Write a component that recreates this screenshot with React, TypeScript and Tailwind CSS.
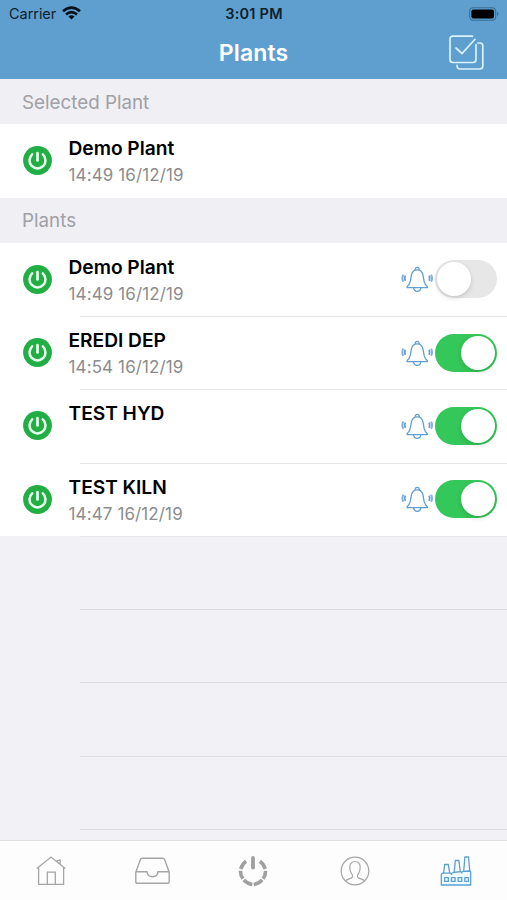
type Plant = { name: string; date?: string; on: boolean };

const plants: Plant[] = [
  { name: "Demo Plant", date: "14:49 16/12/19", on: false },
  { name: "EREDI DEP", date: "14:54 16/12/19", on: true },
  { name: "TEST HYD", on: true },
  { name: "TEST KILN", date: "14:47 16/12/19", on: true },
];

function PowerBadge() {
  return (
    <svg className="ml-[23px] mt-[22px] size-[29px] shrink-0" viewBox="0 0 29 29" fill="none">
      <circle cx="14.5" cy="14.5" r="14.4" fill="#21af43" />
      <path d="M9.2 8.4a8 8 0 1 0 10.6 0" stroke="#eafff0" strokeWidth="2.5" strokeLinecap="round" />
      <path d="M14.5 7.2v7.2" stroke="#eafff0" strokeWidth="2.7" strokeLinecap="round" />
    </svg>
  );
}

function Bell() {
  return (
    <svg className="h-[28px] w-[34px] shrink-0" viewBox="0 0 34 28" fill="none" stroke="#609fd4" strokeWidth="1.3" strokeLinejoin="round">
      <path d="M15.3 5a2 2 0 1 1 3.8 0" />
      <path d="M17.2 4.8c-3.4 0-5.2 2.1-5.8 5.4l-1.2 6.5c-.5 2.2-1.3 3.7-3.2 5v.9h20.4v-.9c-1.9-1.3-2.7-2.8-3.2-5L23 10.2c-.6-3.3-2.4-5.4-5.8-5.4z" />
      <path d="M13.4 22.6c.5 2.6 2 3.7 3.8 3.7s3.3-1.1 3.8-3.7" />
      <path d="M5.3 10.6q-1.3 2.6 0 5.2M29.1 10.6q1.3 2.6 0 5.2" strokeWidth="1.8" />
      <path d="M3.3 9.6q-1.9 3.6 0 7.2M31.1 9.6q1.9 3.6 0 7.2" stroke="#82b3dc" strokeWidth="2" />
    </svg>
  );
}

function Toggle({ on }: { on: boolean }) {
  return (
    <div className={`flex h-[38px] w-[62px] items-center rounded-full p-[2px] ${on ? "justify-end bg-[#34c759]" : "bg-[#e7e7e8]"}`}>
      <div className="size-[34px] rounded-full bg-white shadow-[0_2px_5px_rgba(0,0,0,0.15)]" />
    </div>
  );
}

function PlantRow({ plant, controls = false }: { plant: Plant; controls?: boolean }) {
  return (
    <div className="flex h-[73.3px] bg-white">
      <PowerBadge />
      <div className="ml-[16.5px] w-[200px] pt-[12px]">
        <div className="text-[19.2px] leading-[24px] font-semibold tracking-[-0.03px] whitespace-nowrap text-black">{plant.name}</div>
        <div className="mt-[4px] text-[17px] leading-[22px] tracking-[0.12px] whitespace-nowrap text-[#8c8c8e]">{plant.date}</div>
      </div>
      {controls && (
        <div className="mr-[10px] ml-auto flex h-full items-center">
          <Bell />
          <div className="ml-px">
            <Toggle on={plant.on} />
          </div>
        </div>
      )}
    </div>
  );
}

function Divider({ faint = false }: { faint?: boolean }) {
  return <div className={`relative -mb-px ml-[80px] h-px ${faint ? "bg-[#e6e6e8]" : "bg-[#dcdce1]"}`} />;
}

function SectionTitle({ children }: { children: string }) {
  return (
    <div className="flex h-[45px] items-center bg-[#efeff4] pt-[2px] pl-[22px] text-[18.8px] tracking-[0px] text-[#a0a0a5]">{children}</div>
  );
}

function HomeIcon() {
  return (
    <svg className="h-[30px] w-[30px]" viewBox="0 0 30 30" fill="none" stroke="#a5a5a5" strokeWidth="1.3">
      <path d="M.8 12.4 15 1l14.2 11.4M2.6 11v17.4h25V11M11.3 28.4V16.2h8v12.2M20.2 5.2l3.9-1v4.6" />
    </svg>
  );
}

function InboxIcon() {
  return (
    <svg className="h-[28px] w-[35px]" viewBox="0 0 35 28" fill="none" stroke="#a5a5a5" strokeWidth="1.4" strokeLinejoin="round">
      <path d="M.8 15.2 5.3 2.8q.4-1.5 2-1.5h20.4q1.6 0 2 1.5l4.5 12.4v9.6q0 1.5-1.5 1.5H2.3q-1.5 0-1.5-1.5zM.8 14.8h11.3c.2 3.3 2.4 5 5.4 5s5.2-1.7 5.4-5h11.3" />
    </svg>
  );
}

function PowerIcon() {
  return (
    <svg className="h-[32px] w-[30px]" viewBox="0 0 30 32" fill="none" stroke="#a0a0a0" strokeLinecap="round">
      <path d="M15 3v9.6" strokeWidth="3.8" />
      <g strokeWidth="3.6" strokeLinecap="butt">
        <path d="M8.1 6.3Q4.2 8.8 2.8 14" />
        <path d="M2.4 15.7q.1 4.6 2.5 8" />
        <path d="M5.8 24.9q3.4 4 8.5 4.6" />
        <path d="M15.7 29.5q5.1-.6 8.5-4.6" />
        <path d="M25.1 23.7q2.4-3.4 2.5-8" />
        <path d="M27.2 14q-1.4-5.2-5.3-7.7" />
      </g>
    </svg>
  );
}

function UserIcon() {
  return (
    <svg className="size-[30px]" viewBox="0 0 30 30" fill="none" stroke="#a5a5a5" strokeWidth="1.2">
      <circle cx="15" cy="15" r="13.8" />
      <path d="M5.2 24.8c2.5-2 6.5-2 7.2-3.8.6-1.5-.2-2.8-1.1-3.9-1-1.2-1.4-3.1-1.5-5.2C9.6 7.7 11.7 5.5 15 5.5s5.4 2.2 5.2 6.4c-.1 2.1-.5 4-1.5 5.2-.9 1.1-1.7 2.4-1.1 3.9.7 1.8 4.7 1.8 7.2 3.8" />
    </svg>
  );
}

function FactoryIcon() {
  return (
    <svg className="h-[32px] w-[32px]" viewBox="0 0 32 32" fill="none" stroke="#5ba0d2" strokeWidth="1.3" strokeLinejoin="round">
      <path d="M1.3 30V20q0-1.2 1.2-1.8h7.8q1.2 0 1.2 1.2 0-1.3 1.6-1.9l7.2-.8q1.4 0 1.4 1.4 0-1.4 1.5-1.7l6.1-.4q1.4 0 1.4 1.5V30z" fill="#edfaff" />
      <path d="m3.6 18.2 1.1-8.7h3.6l1.4 8.7M14.2 17.4l1.1-11.8h3.6l1.4 11M23.7 16.4l1.2-14.4h3.6l1.3 14M4.4 9.3h4.3M15 5.4h4.3M24.6 1.8h4.3" />
      <path d="M4.7 22.6h3.7v3.8H4.7zM11.4 22.6h3.7v3.8h-3.7zM18.1 22.6h3.7v3.8h-3.7zM24.8 22.6h3.6v3.8h-3.6z" />
    </svg>
  );
}

function StatusBar() {
  return (
    <div className="grid h-[27px] grid-cols-3 items-center px-[9px] text-[14.5px] text-[#10202c]">
      <div className="flex items-center gap-[6px]">
        <span className="tracking-[-0.05px]">Carrier</span>
        <svg className="-mt-[2px] h-[14px] w-[19px]" viewBox="0 0 19 14" fill="none" stroke="#071018" strokeWidth="2.6">
          <path d="M1 5.2q8.5-7.3 17 0M4 8.5q5.5-4.7 11 0" />
          <path d="m9.5 13.6-3-3.2q3-2.5 6 0z" fill="#071018" stroke="none" />
        </svg>
      </div>
      <div className="pl-px text-center font-semibold tracking-[0.25px] whitespace-nowrap">3:01 PM</div>
      <svg className="-mr-px ml-auto h-[14px] w-[30px]" viewBox="0 0 30 14">
        <rect x=".7" y=".7" width="26" height="12.6" rx="3.6" fill="none" stroke="#3b6d92" strokeWidth="1.1" />
        <rect x="2.4" y="2.4" width="22.6" height="9.2" rx="2" fill="#000" />
        <path d="M28 4.8q2.8 2.2 0 4.4z" fill="#3b6d92" />
      </svg>
    </div>
  );
}

export default function App() {
  return (
    <div className="flex h-[900px] w-[507px] flex-col overflow-hidden bg-[#f1f1f6] font-[Inter,sans-serif]">
      <header className="h-[79.4px] shrink-0 bg-[#5e9fd0]">
        <StatusBar />
        <div className="grid h-[52px] grid-cols-[1fr_auto_1fr] items-center">
          <h1 className="col-start-2 text-[23px] font-semibold tracking-[0.12px] text-white">Plants</h1>
          <svg className="mr-[23.5px] -mt-[2px] ml-auto h-[35px] w-[35px]" viewBox="0 0 35 35" fill="none" stroke="#d8f2ff" strokeWidth="1.7" strokeLinecap="round">
            <path d="M23.5 1.2H4Q1 1.2 1 4.2v20.3q0 3 3 3h20q3 0 3-3v-15" />
            <path d="m7 13 6 5.5L26 4.3M29 8h2.3q2.5 0 2.5 3v20q0 3-3 3H11q-3 0-3-3.7" />
          </svg>
        </div>
      </header>
      <main className="flex-1 overflow-hidden">
        <SectionTitle>Selected Plant</SectionTitle>
        <PlantRow plant={{ name: "Demo Plant", date: "14:49 16/12/19", on: true }} />
        <SectionTitle>Plants</SectionTitle>
        {plants.map((plant) => (
          <div key={plant.name} className="h-[73.3px]">
            <PlantRow plant={plant} controls />
            <Divider faint />
          </div>
        ))}
        {[0, 1, 2, 3].map((i) => (
          <div key={i} className="h-[73.3px] pt-[73.3px]">
            <Divider />
          </div>
        ))}
      </main>
      <nav className="grid h-[60px] shrink-0 grid-cols-5 place-items-center border-t border-[#e1e1e4] bg-[#fdfdfd]">
        <HomeIcon />
        <InboxIcon />
        <PowerIcon />
        <UserIcon />
        <FactoryIcon />
      </nav>
    </div>
  );
}
